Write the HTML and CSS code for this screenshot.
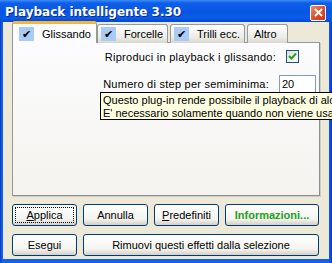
FILE: index.html
```html
<!DOCTYPE html>
<html lang="it">
<head>
  <meta charset="UTF-8" />
  <title>Playback intelligente 3.30</title>
  <link rel="stylesheet" href="styles.css">
</head>
<body>

  <div class="window">
    <!-- ===== TITLE BAR ===== -->
    <div class="titlebar">
      <span class="title">Playback intelligente 3.30</span>
      <button class="close-btn">
        <svg width="9" height="9" viewBox="0 0 9 9"><path d="M1 1 L8 8 M8 1 L1 8" stroke="#fff" stroke-width="2"/></svg>
      </button>
    </div>

    <!-- ===== CLIENT ===== -->
    <div class="client">
      <div class="tabs">
        <div class="tab active"><span class="tab-check">&#10004;</span>Glissando</div>
        <div class="tab"><span class="tab-check">&#10004;</span>Forcelle</div>
        <div class="tab"><span class="tab-check">&#10004;</span>Trilli ecc.</div>
        <div class="tab tab-plain">Altro</div>
      </div>

      <div class="panel">
        <div class="row">
          <span>Riproduci in playback i glissando:</span>
          <span class="checkbox">
            <svg width="9" height="9" viewBox="0 0 9 9"><path d="M1 4 L3.5 6.5 L8 1.5" fill="none" stroke="#21a121" stroke-width="2"/></svg>
          </span>
        </div>
        <div class="row row-step">
          <span>Numero di step per semiminima:</span>
          <input type="text" class="num" value="20">
        </div>
        <div class="tooltip">
          Questo plug-in rende possibile il playback di alcu<br>
          E' necessario solamente quando non viene usato
        </div>
      </div>

      <div class="buttons">
        <div class="btn-row">
          <button class="btn focus"><u>A</u>pplica</button>
          <button class="btn">Annulla</button>
          <button class="btn"><u>P</u>redefiniti</button>
          <button class="btn btn-info">Informazioni...</button>
        </div>
        <div class="btn-row">
          <button class="btn">Esegui</button>
          <button class="btn btn-wide">Rimuovi questi effetti dalla selezione</button>
        </div>
      </div>
    </div>
  </div>

</body>
</html>
```

FILE: styles.css
```css
* {
  box-sizing: border-box;
  margin: 0;
  padding: 0;
}

body {
  width: 332px;
  height: 263px;
  overflow: hidden;
  font-family: "Liberation Sans", Arial, sans-serif;
  font-size: 11px;
  color: #000;
  background: #fff;
}

.window {
  width: 332px;
  height: 263px;
  display: flex;
  flex-direction: column;
  padding: 0 3px 4px 3px;
  background: linear-gradient(to right, #0734c8, #1661ea 2px, #1661ea 329px, #0734c8);
}

/* ===== TITLE BAR ===== */
.titlebar {
  height: 22px;
  margin: 0 -3px;
  padding: 0 6px 0 5px;
  display: flex;
  align-items: center;
  justify-content: space-between;
  background: linear-gradient(to bottom, #3b8cf8 0, #0e5ee8 3px, #0656e4 12px, #0a5ce8 18px, #0347d4 22px);
}

.title {
  color: #fff;
  font-family: "DejaVu Sans", sans-serif;
  font-weight: bold;
  font-size: 12px;
  text-shadow: 1px 1px 0 #0a2a8a;
  margin-top: 1px;
}

.close-btn {
  width: 16px;
  height: 16px;
  margin-top: 3px;
  border: 1px solid #fff;
  border-radius: 2px;
  background: linear-gradient(135deg, #f08a6a, #e2502a 50%, #c8341a);
  display: flex;
  align-items: center;
  justify-content: center;
}

/* ===== CLIENT ===== */
.client {
  flex: 1;
  background: #ece9d8;
  padding: 0 9px;
  display: flex;
  flex-direction: column;
}

.tabs {
  display: flex;
  align-items: flex-end;
  height: 21px;
  margin-bottom: -1px;
  position: relative;
  z-index: 1;
}

.tab {
  height: 19px;
  padding: 0 4px 0 3px;
  border: 1px solid #919b9c;
  border-bottom: none;
  border-radius: 3px 3px 0 0;
  background: linear-gradient(to bottom, #fff, #ecebe5 70%, #d8d6cc);
  display: flex;
  align-items: center;
  margin-right: 2px;
}

.tab.active {
  height: 22px;
  background: #fcfcfe;
  border-top: 3px solid #f5b63a;
  padding: 0 5px 0 6px;
  margin-right: 0;
}

.tab-plain {
  padding: 0 10px 0 6px;
}

.tab-check {
  width: 15px;
  height: 14px;
  background: #a9cbf5;
  font-size: 11px;
  line-height: 14px;
  text-align: center;
  margin-right: 8px;
}

.panel {
  height: 154px;
  position: relative;
  border: 1px solid #919b9c;
  border-right-color: #8a9091;
  border-bottom-color: #8a9091;
  box-shadow: 1px 1px 0 #d0cec2;
  background: linear-gradient(to bottom, #fcfcfe, #f4f3ee);
  padding: 5px 20px 0 0;
  display: flex;
  flex-direction: column;
  align-items: flex-end;
  letter-spacing: 0.25px;
}

.row {
  display: flex;
  align-items: center;
  height: 17px;
}

.row span:first-child {
  margin-right: 10px;
}

.row-step {
  margin-top: 10px;
  margin-right: -17px;
}

.checkbox {
  width: 13px;
  height: 13px;
  border: 1px solid #1c5180;
  background: linear-gradient(135deg, #dcdcd4, #fff);
  display: flex;
  align-items: center;
  justify-content: center;
}

.num {
  width: 37px;
  height: 18px;
  border: 1px solid #7f9db9;
  font-family: inherit;
  font-size: 11px;
  padding-left: 2px;
}

.tooltip {
  position: absolute;
  left: 87px;
  top: 49px;
  width: 240px;
  height: 28px;
  border: 1px solid #000;
  border-right: none;
  background: #ffffe1;
  padding: 1px 0 0 2px;
  line-height: 13px;
  white-space: nowrap;
  letter-spacing: 0;
}

/* ===== BUTTONS ===== */
.buttons {
  display: flex;
  flex-direction: column;
  gap: 8px;
  padding-top: 8px;
}

.btn-row {
  display: flex;
  gap: 6px;
}

.btn {
  width: 65px;
  height: 22px;
  border: 1px solid #003c74;
  border-radius: 3px;
  background: linear-gradient(to bottom, #fff, #f4f4f0 70%, #d6d0c5);
  font-family: inherit;
  font-size: 11px;
  color: #000;
}

.btn.focus {
  outline: 1px dotted #000;
  outline-offset: -4px;
}

.btn-info {
  width: 94px;
  color: #21a121;
  font-weight: bold;
}

.btn-wide {
  width: 236px;
}
```
